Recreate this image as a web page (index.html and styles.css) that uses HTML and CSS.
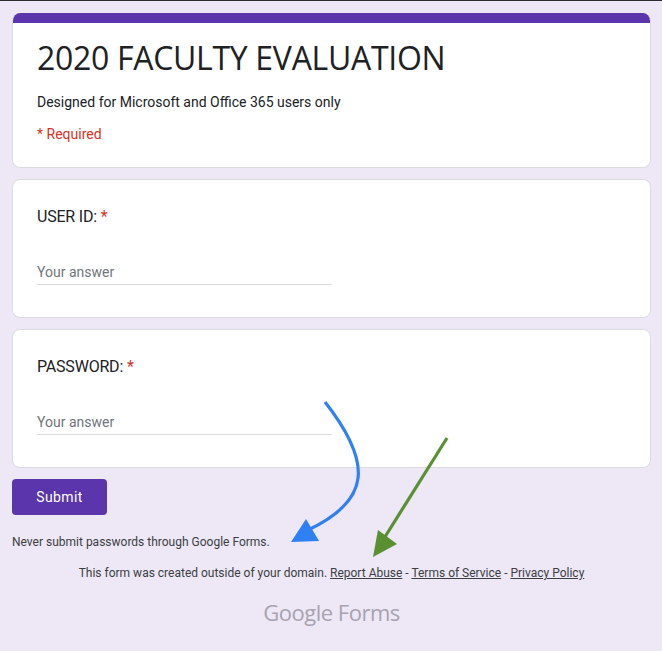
FILE: index.html
```html
<!DOCTYPE html>
<html lang="en">
<head>
  <meta charset="UTF-8" />
  <meta name="viewport" content="width=device-width, initial-scale=1.0"/>
  <title>2020 FACULTY EVALUATION</title>
  <link rel="stylesheet" href="styles.css">
</head>
<body>
  <div class="topline"></div>

  <div class="form">
    <div class="card header">
      <div class="band"></div>
      <div class="head-body">
        <h1 class="title">2020 FACULTY EVALUATION</h1>
        <p class="desc">Designed for Microsoft and Office 365 users only</p>
        <p class="required">* Required</p>
      </div>
    </div>

    <div class="card question">
      <div class="q-title">USER ID: <span class="star">*</span></div>
      <div class="answer"><input type="text" placeholder="Your answer"></div>
    </div>

    <div class="card question">
      <div class="q-title">PASSWORD: <span class="star">*</span></div>
      <div class="answer"><input type="text" placeholder="Your answer"></div>
    </div>

    <div class="actions">
      <button class="submit">Submit</button>
    </div>

    <p class="warning">Never submit passwords through Google Forms.</p>

    <p class="footer">This form was created outside of your domain. <a href="#">Report Abuse</a> - <a href="#">Terms of Service</a> - <a href="#">Privacy Policy</a></p>

    <div class="brand"><span class="g">Google</span> <span class="f">Forms</span></div>
  </div>

  <!-- annotation arrows drawn over the page -->
  <svg class="arrows" width="662" height="651" viewBox="0 0 662 651">
    <path d="M325 402 C 372 462, 372 500, 308 530" fill="none" stroke="#2f80f5" stroke-width="3.2"/>
    <polygon points="291,542 306,519 319,541" fill="#2f80f5"/>
    <line x1="447" y1="438" x2="383" y2="540" stroke="#5a8f32" stroke-width="3.2"/>
    <polygon points="373,557 378,530 397,544" fill="#5a8f32"/>
  </svg>
</body>
</html>
```

FILE: styles.css
```css
body {
  margin: 0;
  background-color: #ede7f6;
  font-family: Roboto, "Liberation Sans", Arial, sans-serif;
  color: #202124;
  position: relative;
  min-height: 651px;
}

.topline {
  height: 1px;
  background-color: #2b2b2b;
}

.form {
  margin: 12px 11px 0 12px;
}

.card {
  background-color: #fff;
  border: 1px solid #dadce0;
  border-radius: 8px;
  margin-bottom: 11px;
}

.header {
  overflow: hidden;
  border-top: none;
}

.band {
  height: 10px;
  background-color: #5b35ac;
}

.head-body {
  padding: 13px 24px 23px 24px;
}

.title {
  font-family: "Open Sans", Lato, sans-serif;
  font-weight: 400;
  font-size: 32px;
  line-height: 44px;
  margin: 0;
  letter-spacing: -0.3px;
  color: #202124;
}

.desc {
  font-size: 14px;
  line-height: 20px;
  margin: 12px 0 0 0;
}

.required {
  font-size: 14px;
  line-height: 20px;
  margin: 12px 0 0 0;
  color: #d93025;
}

.question {
  padding: 25px 24px 32px 24px;
}

.q-title {
  font-size: 16px;
  line-height: 24px;
  letter-spacing: -0.2px;
}

.star {
  color: #d93025;
}

.answer {
  margin-top: 33px;
  width: 295px;
  border-bottom: 1px solid #dadce0;
}

.answer input {
  display: block;
  width: 100%;
  border: none;
  outline: none;
  padding: 0 0 2px 0;
  font-family: Roboto, sans-serif;
  font-size: 14px;
  line-height: 20px;
  height: 20px;
  background: transparent;
}

.answer input::placeholder {
  color: #70757a;
}

.actions {
  margin-top: 11px;
}

.submit {
  width: 95px;
  height: 36px;
  background-color: #5b35ac;
  color: #fff;
  border: none;
  border-radius: 4px;
  font-family: Roboto, sans-serif;
  font-size: 14px;
  font-weight: 400;
  letter-spacing: 0.4px;
  cursor: pointer;
}

.warning {
  font-size: 12px;
  line-height: 16px;
  margin: 19px 0 0 0;
  color: #3c4043;
}

.footer {
  font-size: 12px;
  line-height: 16px;
  margin: 15px 0 0 0;
  text-align: center;
  color: #3c4043;
}

.footer a {
  color: #3c4043;
}

.brand {
  margin-top: 17px;
  text-align: center;
  color: #a8a3b0;
  font-family: "Open Sans", sans-serif;
  font-size: 22px;
  line-height: 28px;
  letter-spacing: -0.5px;
}

.brand .g {
  font-weight: 500;
}

.arrows {
  position: absolute;
  top: 0;
  left: 0;
  pointer-events: none;
}
```
